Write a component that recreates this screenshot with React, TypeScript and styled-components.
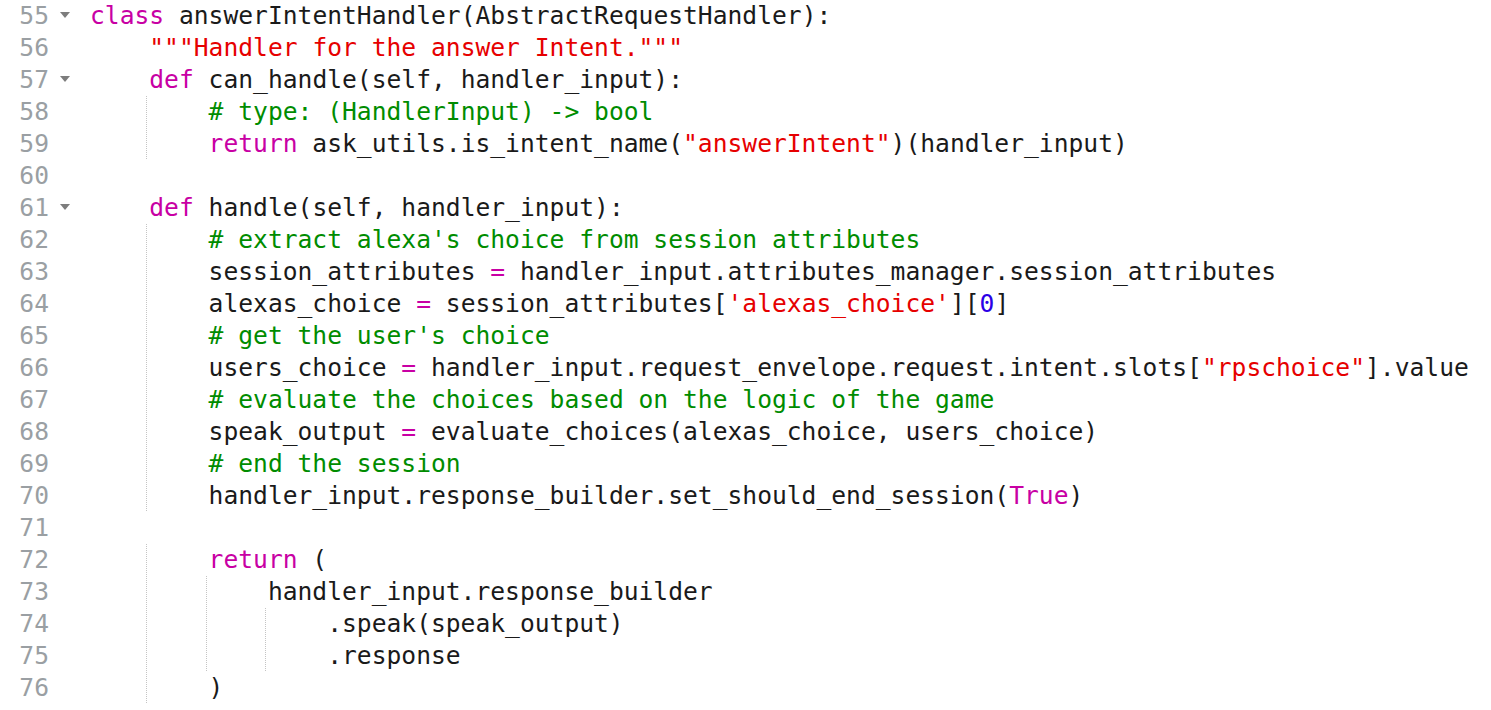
import React from "react";
import styled, { createGlobalStyle } from "styled-components";

const GlobalStyle = createGlobalStyle`
  html, body { margin: 0; padding: 0; background: #ffffff; }
  body { font-family: "DejaVu Sans Mono", "Liberation Mono", monospace; }
`;

type TokType = "t" | "kw" | "str" | "com" | "op" | "num" | "const";
type Tok = [TokType, string];
interface Line {
  n: number;
  indent: number;
  fold?: boolean;
  toks: Tok[];
}

const lines: Line[] = [
  { n: 55, indent: 0, fold: true, toks: [["kw", "class"], ["t", " answerIntentHandler(AbstractRequestHandler):"]] },
  { n: 56, indent: 1, toks: [["str", '"""Handler for the answer Intent."""']] },
  { n: 57, indent: 1, fold: true, toks: [["kw", "def"], ["t", " can_handle(self, handler_input):"]] },
  { n: 58, indent: 2, toks: [["com", "# type: (HandlerInput) -> bool"]] },
  { n: 59, indent: 2, toks: [["kw", "return"], ["t", " ask_utils.is_intent_name("], ["str", '"answerIntent"'], ["t", ")(handler_input)"]] },
  { n: 60, indent: 0, toks: [] },
  { n: 61, indent: 1, fold: true, toks: [["kw", "def"], ["t", " handle(self, handler_input):"]] },
  { n: 62, indent: 2, toks: [["com", "# extract alexa's choice from session attributes"]] },
  { n: 63, indent: 2, toks: [["t", "session_attributes "], ["op", "="], ["t", " handler_input.attributes_manager.session_attributes"]] },
  { n: 64, indent: 2, toks: [["t", "alexas_choice "], ["op", "="], ["t", " session_attributes["], ["str", "'alexas_choice'"], ["t", "]["], ["num", "0"], ["t", "]"]] },
  { n: 65, indent: 2, toks: [["com", "# get the user's choice"]] },
  { n: 66, indent: 2, toks: [["t", "users_choice "], ["op", "="], ["t", " handler_input.request_envelope.request.intent.slots["], ["str", '"rpschoice"'], ["t", "].value"]] },
  { n: 67, indent: 2, toks: [["com", "# evaluate the choices based on the logic of the game"]] },
  { n: 68, indent: 2, toks: [["t", "speak_output "], ["op", "="], ["t", " evaluate_choices(alexas_choice, users_choice)"]] },
  { n: 69, indent: 2, toks: [["com", "# end the session"]] },
  { n: 70, indent: 2, toks: [["t", "handler_input.response_builder.set_should_end_session("], ["const", "True"], ["t", ")"]] },
  { n: 71, indent: 0, toks: [] },
  { n: 72, indent: 2, toks: [["kw", "return"], ["t", " ("]] },
  { n: 73, indent: 3, toks: [["t", "handler_input.response_builder"]] },
  { n: 74, indent: 4, toks: [["t", ".speak(speak_output)"]] },
  { n: 75, indent: 4, toks: [["t", ".response"]] },
  { n: 76, indent: 2, toks: [["t", ")"]] },
];

const colors: Record<TokType, string> = {
  t: "#1a1a1a",
  kw: "#c800a4",
  str: "#e60000",
  com: "#008c00",
  op: "#c800a4",
  num: "#2b00e6",
  const: "#c800a4",
};

const Editor = styled.div`
  display: flex;
  flex-direction: column;
  background: #ffffff;
  font-family: "DejaVu Sans Mono", "Liberation Mono", monospace;
  font-size: 24.64px;
  line-height: 32px;
  white-space: pre;
`;

const Row = styled.div`
  display: flex;
  height: 32px;
`;

const Gutter = styled.div`
  display: flex;
  align-items: center;
  width: 90px;
  flex: none;
`;

const LineNo = styled.span`
  width: 49px;
  text-align: right;
  color: #9a9fa3;
`;

const FoldSlot = styled.span`
  width: 41px;
  display: flex;
  align-items: center;
  padding-left: 11px;
  box-sizing: border-box;
`;

const FoldArrow = styled.span`
  width: 0;
  height: 0;
  border-left: 5px solid transparent;
  border-right: 5px solid transparent;
  border-top: 6px solid #7d7d7d;
  margin-top: -3px;
`;

const Code = styled.div`
  display: flex;
`;

const Indent = styled.span<{ $guide: boolean }>`
  display: inline-block;
  width: 4ch;
  height: 32px;
  background-image: ${(p) =>
    p.$guide
      ? "repeating-linear-gradient(to bottom, #c4c4c4 0 1px, transparent 1px 2px)"
      : "none"};
  background-size: 1px 100%;
  background-repeat: no-repeat;
  background-position: calc(100% - 2px) 0;
`;

const Token = styled.span<{ $c: string }>`
  color: ${(p) => p.$c};
`;

export default function App() {
  return (
    <>
      <GlobalStyle />
      <Editor>
        {lines.map((ln) => (
          <Row key={ln.n}>
            <Gutter>
              <LineNo>{ln.n}</LineNo>
              <FoldSlot>{ln.fold ? <FoldArrow /> : null}</FoldSlot>
            </Gutter>
            <Code>
              {Array.from({ length: ln.indent }).map((_, i) => (
                <Indent key={i} $guide={i < ln.indent - 1} />
              ))}
              {ln.toks.map((tk, i) => (
                <Token key={i} $c={colors[tk[0]]}>
                  {tk[1]}
                </Token>
              ))}
            </Code>
          </Row>
        ))}
      </Editor>
    </>
  );
}
